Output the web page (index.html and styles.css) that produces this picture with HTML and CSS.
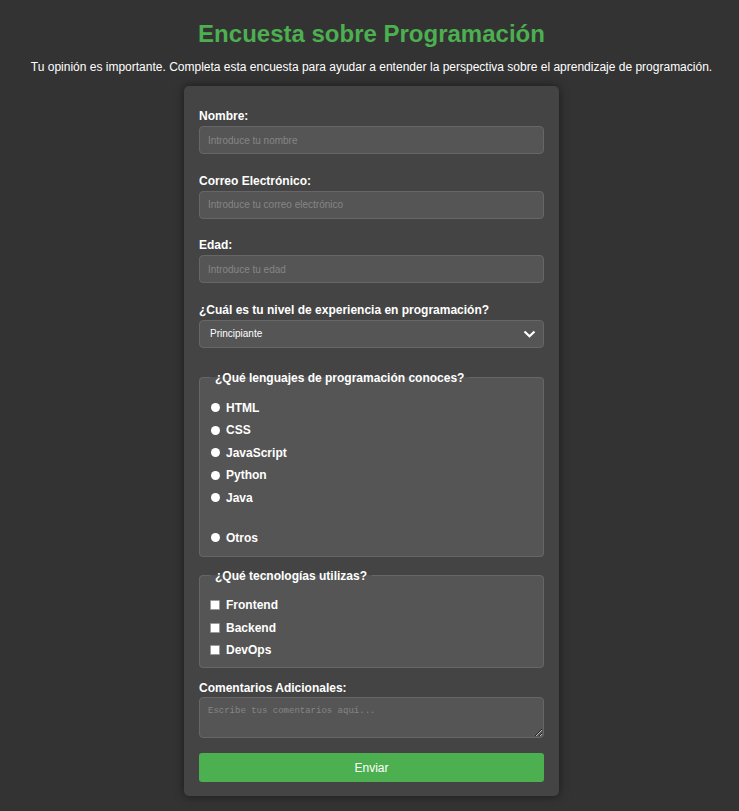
FILE: index.html
```html
<!DOCTYPE html>
<html lang="es">
<head>
<meta charset="utf-8">
<title>Encuesta sobre Programación</title>
<link rel="stylesheet" href="styles.css">
</head>
<body>
<h1 class="title">Encuesta sobre Programación</h1>
<p class="intro">Tu opinión es importante. Completa esta encuesta para ayudar a entender la perspectiva sobre el aprendizaje de programación.</p>
<form class="card">
  <label class="lbl" for="nombre">Nombre:</label>
  <input class="field" id="nombre" type="text" placeholder="Introduce tu nombre">
  <label class="lbl" for="correo">Correo Electrónico:</label>
  <input class="field" id="correo" type="email" placeholder="Introduce tu correo electrónico">
  <label class="lbl" for="edad">Edad:</label>
  <input class="field" id="edad" type="number" placeholder="Introduce tu edad">
  <label class="lbl" for="nivel">¿Cuál es tu nivel de experiencia en programación?</label>
  <div class="select-wrap">
    <select class="field select" id="nivel">
      <option>Principiante</option>
      <option>Intermedio</option>
      <option>Avanzado</option>
    </select>
    <svg class="chev" width="13" height="8" viewBox="0 0 13 8"><path d="M1.5 1.5 L6.5 6.2 L11.5 1.5" fill="none" stroke="#fff" stroke-width="2.2"/></svg>
  </div>
  <fieldset class="group group-lang">
    <legend class="legend">¿Qué lenguajes de programación conoces?</legend>
    <label class="opt"><input class="radio" type="radio" name="lang">HTML</label>
    <label class="opt"><input class="radio" type="radio" name="lang">CSS</label>
    <label class="opt"><input class="radio" type="radio" name="lang">JavaScript</label>
    <label class="opt"><input class="radio" type="radio" name="lang">Python</label>
    <label class="opt"><input class="radio" type="radio" name="lang">Java</label>
    <div class="spacer"></div>
    <label class="opt"><input class="radio" type="radio" name="lang">Otros</label>
  </fieldset>
  <fieldset class="group group-tech">
    <legend class="legend">¿Qué tecnologías utilizas?</legend>
    <label class="opt"><input class="check" type="checkbox">Frontend</label>
    <label class="opt"><input class="check" type="checkbox">Backend</label>
    <label class="opt"><input class="check" type="checkbox">DevOps</label>
  </fieldset>
  <label class="lbl lbl-area" for="coment">Comentarios Adicionales:</label>
  <textarea class="field area" id="coment" placeholder="Escribe tus comentarios aquí..."></textarea>
  <button class="submit" type="button">Enviar</button>
</form>
</body>
</html>
```
FILE: styles.css
```css
html, body {
  margin: 0;
  background: #333333;
}
body {
  padding: 20px 0 14px 4px;
  font-family: "Liberation Sans", Arial, sans-serif;
  color: #ffffff;
}
.title {
  margin: 0;
  font-size: 24px;
  font-weight: bold;
  color: #4caf50;
  text-align: center;
  line-height: 28px;
}
.intro {
  margin: 12px 0 0;
  font-size: 12px;
  line-height: 15px;
  text-align: center;
  white-space: nowrap;
}
.card {
  width: 345px;
  margin: 11px auto 0;
  padding: 23px 15px 14px;
  background: #444444;
  border-radius: 5px;
  box-shadow: 0 0 10px rgba(0, 0, 0, 0.5);
  display: flex;
  flex-direction: column;
}
.lbl {
  display: block;
  font-size: 12px;
  font-weight: bold;
  line-height: 14px;
  margin-bottom: 3px;
}
.lbl-area {
  margin-bottom: 2px;
}
.field {
  box-sizing: border-box;
  width: 100%;
  height: 28px;
  margin: 0 0 19.6px;
  padding: 0 8px;
  background: #555555;
  border: 1px solid #666666;
  border-radius: 4px;
  color: #ffffff;
  font-family: "Liberation Sans", Arial, sans-serif;
  font-size: 10px;
  outline: none;
}
.field::placeholder {
  color: #858585;
}
.select-wrap {
  position: relative;
  margin-bottom: 23px;
}
.select {
  appearance: none;
  -webkit-appearance: none;
  margin: 0;
  padding-left: 10px;
}
.chev {
  position: absolute;
  right: 8px;
  top: 10px;
  pointer-events: none;
}
.group {
  margin: 0;
  padding: 16px 10px 11px;
  background: #555555;
  border: 1px solid #666666;
  border-radius: 4px;
  display: flex;
  flex-direction: column;
  gap: 8.5px;
}
.group-lang {
  margin-bottom: 12px;
}
.group-tech {
  margin-bottom: 13px;
  padding-top: 15.5px;
  padding-bottom: 10px;
}
.legend {
  padding: 0 5px;
  font-size: 12px;
  font-weight: bold;
  line-height: 14px;
}
.opt {
  display: flex;
  align-items: center;
  height: 14px;
  font-size: 12px;
  font-weight: bold;
  line-height: 14px;
}
.spacer {
  height: 9px;
}
.radio {
  appearance: none;
  -webkit-appearance: none;
  width: 9px;
  height: 9px;
  margin: 0 6px 0 1px;
  border-radius: 50%;
  background: #ffffff;
  border: 0;
}
.check {
  appearance: none;
  -webkit-appearance: none;
  box-sizing: border-box;
  width: 10px;
  height: 10px;
  margin: 0 6px 0 0;
  background: #ffffff;
  border: 1px solid #9a9a9a;
  border-radius: 1px;
}
.area {
  height: 41px;
  padding: 8px;
  margin-bottom: 15px;
  resize: vertical;
  font-family: "Liberation Mono", "DejaVu Sans Mono", monospace;
  font-size: 9px;
  line-height: 11px;
}
.submit {
  height: 29px;
  border: 0;
  border-radius: 3px;
  background: #4caf50;
  color: #ffffff;
  font-family: "Liberation Sans", Arial, sans-serif;
  font-size: 12px;
}
```
